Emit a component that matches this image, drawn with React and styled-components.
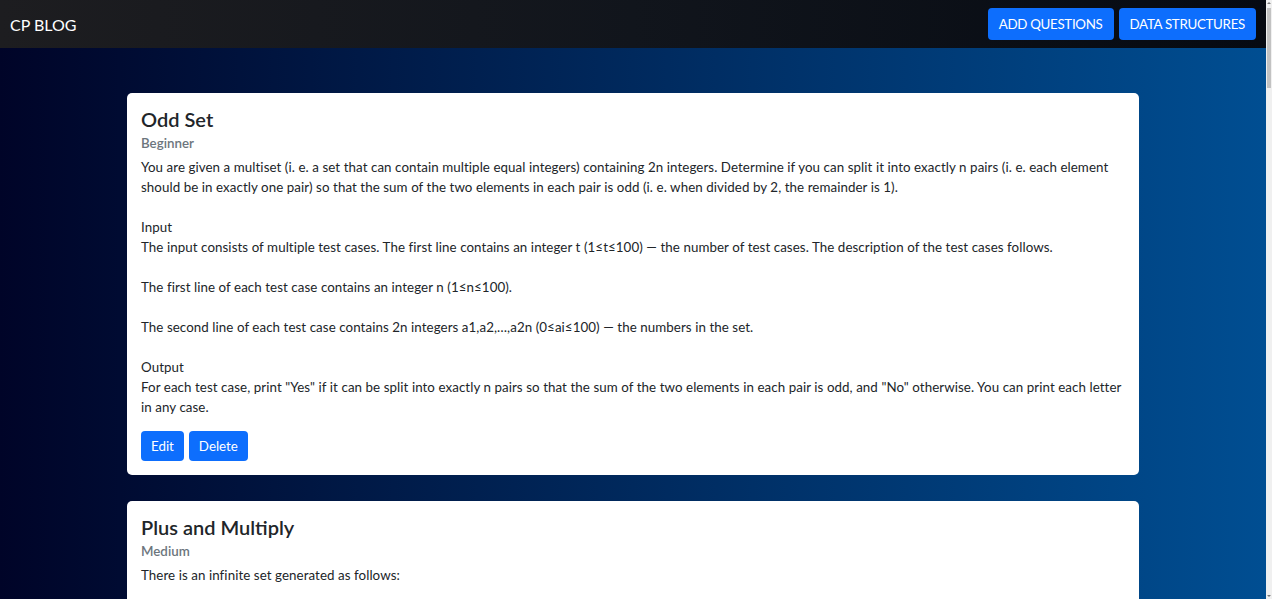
import React from 'react';
import styled, { createGlobalStyle } from 'styled-components';

const Global = createGlobalStyle`
  html, body { margin: 0; padding: 0; overflow: hidden; }
  body {
    font-family: Lato, "Liberation Sans", sans-serif;
    background: #f0f0f0;
    color: #212529;
  }
`;

const Page = styled.div`
  width: calc(100% - 6px);
  min-height: 100vh;
  background: linear-gradient(to right, #000428, #004e92);
`;

const ScrollTrack = styled.div`
  position: fixed;
  top: 0;
  right: 0;
  width: 6px;
  height: 100vh;
  background: #f0f0f0;
  display: flex;
  flex-direction: column;
  align-items: center;
`;

const ScrollArrow = styled.span`
  width: 0;
  height: 0;
  margin: 2px 0;
  border-left: 2px solid transparent;
  border-right: 2px solid transparent;
  ${p => (p.$down ? 'border-top: 2px solid #7a7a7a;' : 'border-bottom: 2px solid #7a7a7a;')}
`;

const ScrollThumb = styled.span`
  width: 4px;
  height: 80px;
  margin-top: 2px;
  background: #c2c2c2;
`;

const ScrollSpacer = styled.span`
  flex: 1;
`;

const Nav = styled.nav`
  height: 48px;
  padding: 0 10px;
  display: flex;
  align-items: center;
  justify-content: space-between;
  background: linear-gradient(to right, #1d1d20, #11151c 50%, #060a12);
`;

const Brand = styled.a`
  color: #fff;
  font-size: 16px;
  text-decoration: none;
`;

const NavActions = styled.div`
  display: flex;
  gap: 5px;
`;

const Button = styled.button`
  font-family: inherit;
  border: none;
  background: #0d6efd;
  color: #fff;
  height: ${p => (p.$small ? 30 : 32)}px;
  padding: 0 ${p => (p.$small ? 10 : 11)}px;
  font-size: 13.33px;
  letter-spacing: ${p => (p.$small ? '0' : '-0.3px')};
  border-radius: 4px;
  cursor: pointer;
`;

const Main = styled.main`
  padding: 45px 0;
  display: flex;
  flex-direction: column;
  align-items: center;
  gap: 26px;
`;

const Card = styled.article`
  width: 1012px;
  box-sizing: border-box;
  background: #fff;
  border-radius: 5px;
  padding: 14px;
`;

const Title = styled.h2`
  margin: 0 0 6.67px;
  font-size: 20px;
  line-height: 24px;
  font-weight: 600;
  color: #212529;
`;

const Subtitle = styled.h3`
  margin: -2.5px 0 5.8px;
  font-size: 13.33px;
  line-height: 16px;
  font-weight: 600;
  color: #6c757d;
`;

const Body = styled.p`
  margin: 0 0 14px;
  font-size: 13.33px;
  line-height: 20px;
  letter-spacing: 0.07px;
  white-space: pre-line;
`;

const Actions = styled.div`
  display: flex;
  gap: 5px;
`;

const questions = [
  {
    title: 'Odd Set',
    level: 'Beginner',
    text: `You are given a multiset (i. e. a set that can contain multiple equal integers) containing 2n integers. Determine if you can split it into exactly n pairs (i. e. each element should be in exactly one pair) so that the sum of the two elements in each pair is odd (i. e. when divided by 2, the remainder is 1).

Input
The input consists of multiple test cases. The first line contains an integer t (1≤t≤100) — the number of test cases. The description of the test cases follows.

The first line of each test case contains an integer n (1≤n≤100).

The second line of each test case contains 2n integers a1,a2,…,a2n (0≤ai≤100) — the numbers in the set.

Output
For each test case, print "Yes" if it can be split into exactly n pairs so that the sum of the two elements in each pair is odd, and "No" otherwise. You can print each letter in any case.`,
  },
  {
    title: 'Plus and Multiply',
    level: 'Medium',
    text: `There is an infinite set generated as follows:

1 is in this set.
If x is in this set, x⋅a and x+b both are in this set.

Given positive integers a, b, n, determine if n is in this set.`,
  },
];

export default function App() {
  return (
    <>
      <Global />
      <Page>
        <Nav>
          <Brand href="#">CP BLOG</Brand>
          <NavActions>
            <Button>ADD QUESTIONS</Button>
            <Button>DATA STRUCTURES</Button>
          </NavActions>
        </Nav>
        <Main>
          {questions.map(q => (
            <Card key={q.title}>
              <Title>{q.title}</Title>
              <Subtitle>{q.level}</Subtitle>
              <Body>{q.text}</Body>
              <Actions>
                <Button $small>Edit</Button>
                <Button $small>Delete</Button>
              </Actions>
            </Card>
          ))}
        </Main>
      </Page>
      <ScrollTrack aria-hidden="true">
        <ScrollArrow />
        <ScrollThumb />
        <ScrollSpacer />
        <ScrollArrow $down />
      </ScrollTrack>
    </>
  );
}
